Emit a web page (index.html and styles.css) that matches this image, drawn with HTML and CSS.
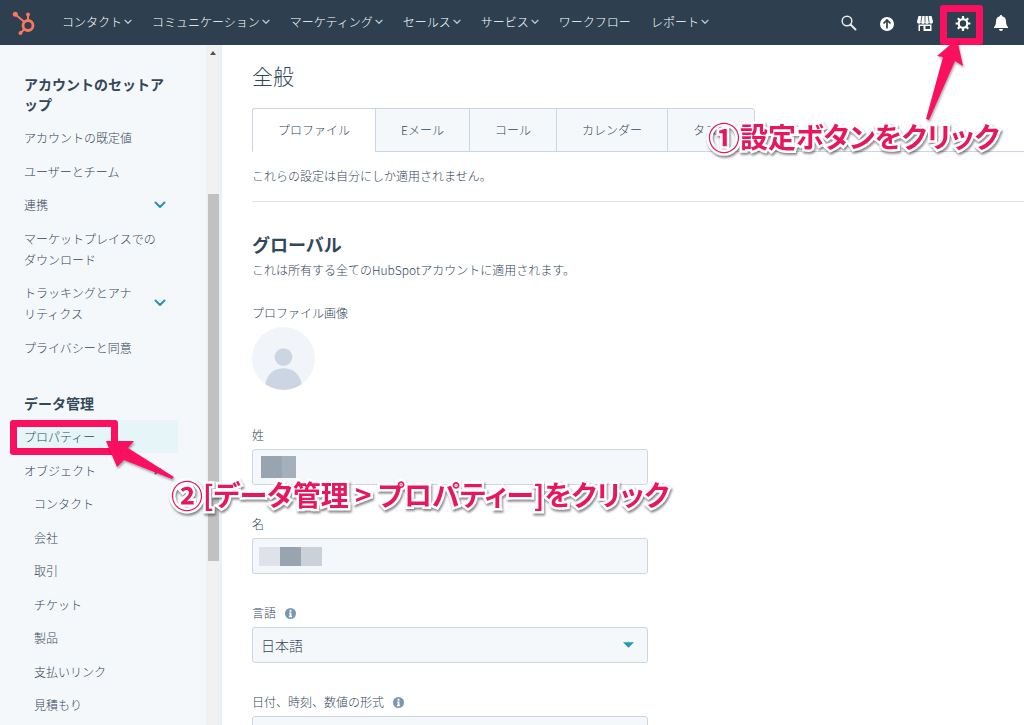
FILE: index.html
```html
<!DOCTYPE html>
<html lang="ja">
<head>
<meta charset="utf-8">
<title>設定 - 全般</title>
<link rel="stylesheet" href="styles.css">
</head>
<body>
<svg class="defs" aria-hidden="true">
  <symbol id="chev" viewBox="0 0 12 8"><path d="M1.500 1.500 6 6l4.500-4.500" fill="none" stroke="currentColor" stroke-width="2" stroke-linecap="round" stroke-linejoin="round"/></symbol>
  <symbol id="info" viewBox="0 0 12 12"><circle cx="6" cy="6" r="6" fill="#7895b5"/><path d="M5 2h2v2H5zM4.500 5H7v3.500h.8V10H4.300V8.500H5V6h-.5z" fill="#fff"/></symbol>
</svg>

<header class="topbar">
  <a class="logo" href="#" aria-label="HubSpot">
    <svg viewBox="0 0 24 26" width="24" height="26" fill="none" stroke="#f8795c">
      <circle cx="16" cy="15.500" r="5" stroke-width="2.800"/>
      <path d="M16 10V5M12.500 12 4 5M12.500 19 9 22.500" stroke-width="2"/>
      <g fill="#f8795c" stroke="none"><circle cx="3.300" cy="4.200" r="2.500"/><circle cx="16" cy="4.500" r="2"/><circle cx="8.500" cy="23" r="2"/></g>
    </svg>
  </a>
  <nav class="menu" aria-label="メイン">
    <a href="#">コンタクト<svg><use href="#chev"/></svg></a>
    <a href="#">コミュニケーション<svg><use href="#chev"/></svg></a>
    <a href="#">マーケティング<svg><use href="#chev"/></svg></a>
    <a href="#">セールス<svg><use href="#chev"/></svg></a>
    <a href="#">サービス<svg><use href="#chev"/></svg></a>
    <a href="#">ワークフロー</a>
    <a href="#">レポート<svg><use href="#chev"/></svg></a>
  </nav>
  <div class="tools">
    <button type="button" aria-label="検索"><svg viewBox="0 0 18 18" fill="none" stroke="#e6ebef"><circle cx="7" cy="7" r="4.800" stroke-width="1.500"/><path d="m10.500 10.500 5 5" stroke-width="2" stroke-linecap="round"/></svg></button>
    <button type="button" aria-label="アップグレード"><svg viewBox="0 0 18 18"><circle cx="9" cy="10" r="7" fill="#fff"/><path d="M9 14.500V6.500M5.500 9.500 9 6l3.500 3.500" fill="none" stroke="#2e3f50" stroke-width="1.700"/></svg></button>
    <button type="button" aria-label="マーケットプレイス"><svg viewBox="0 0 18 18"><path d="M2.500 2h13L17 7.500a2 2 0 0 1-4 .5 2 2 0 0 1-4 0 2 2 0 0 1-4 0A2 2 0 0 1 1 7.500zM2.500 10.500h13v6.500h-13z" fill="#fff"/><path d="M5.800 2 5 8M9 2v6M12.200 2l.8 6" stroke="#2e3f50" stroke-width=".8"/><path d="M4 12h3.500v5H4zM9.500 12H14v3H9.500z" fill="#2e3f50"/></svg></button>
    <button type="button" aria-label="設定"><svg viewBox="0 0 18 18" fill="none" stroke="#fff"><circle cx="9" cy="9.500" r="4.300" stroke-width="2.200"/><path d="M9 2.100v3M9 13.900v3M1.600 9.500h3M13.400 9.500h3M3.800 4.300l2 2M12.200 12.700l2 2M3.800 14.700l2-2M12.200 6.300l2-2" stroke-width="2.200"/></svg></button>
    <button type="button" aria-label="通知"><svg viewBox="0 0 18 18" fill="#fff"><path d="M9 1a1.300 1.300 0 0 0-1.300 1.200C5.200 2.800 4 4.700 4 7.200c0 3.500-1 4.800-2 5.800v1h14v-1c-1-1-2-2.300-2-5.800 0-2.500-1.200-4.400-3.700-5A1.300 1.300 0 0 0 9 1zM7 15h4a2 2 0 0 1-4 0z"/></svg></button>
  </div>
</header>

<div class="shell">
  <aside class="sidebar">
    <nav class="side-nav" aria-label="設定">
      <h2>アカウントのセットアップ</h2>
      <ul>
        <li><a href="#">アカウントの既定値</a></li>
        <li><a href="#">ユーザーとチーム</a></li>
        <li><a href="#"><span>連携</span><svg><use href="#chev"/></svg></a></li>
        <li><a href="#">マーケットプレイスでのダウンロード</a></li>
        <li><a href="#"><span>トラッキングとアナリティクス</span><svg><use href="#chev"/></svg></a></li>
        <li><a href="#">プライバシーと同意</a></li>
      </ul>
      <h2>データ管理</h2>
      <ul>
        <li><a class="current" href="#">プロパティー</a></li>
        <li><a href="#"><span>オブジェクト</span><svg class="up"><use href="#chev"/></svg></a></li>
      </ul>
      <ul class="sub">
        <li><a href="#">コンタクト</a></li>
        <li><a href="#">会社</a></li>
        <li><a href="#">取引</a></li>
        <li><a href="#">チケット</a></li>
        <li><a href="#">製品</a></li>
        <li><a href="#">支払いリンク</a></li>
        <li><a href="#">見積もり</a></li>
      </ul>
    </nav>
    <div class="scroll" aria-hidden="true">
      <svg viewBox="0 0 6 4" width="6" height="4"><path d="M3 0 6 4H0z" fill="#505050"/></svg>
      <div class="thumb"></div>
    </div>
  </aside>

  <main class="content">
    <h1>全般</h1>
    <div class="tabs" role="tablist">
      <button type="button" role="tab" aria-selected="true">プロファイル</button>
      <button type="button" role="tab">Eメール</button>
      <button type="button" role="tab">コール</button>
      <button type="button" role="tab">カレンダー</button>
      <button type="button" role="tab">タスク</button>
    </div>
    <p class="note">これらの設定は自分にしか適用されません。</p>
    <section class="global">
      <h2>グローバル</h2>
      <p>これは所有する全てのHubSpotアカウントに適用されます。</p>
      <div class="field photo">
        <span class="label">プロファイル画像</span>
        <svg class="avatar" viewBox="0 0 64 64"><defs><clipPath id="round"><circle cx="32" cy="32" r="32"/></clipPath></defs><g clip-path="url(#round)"><path d="M0 0h64v64H0z" fill="#f1f4f8"/><circle cx="32" cy="30.500" r="9" fill="#cbd6e2"/><path d="M13 64c0-13 7-22 19-22s19 9 19 22z" fill="#cbd6e2"/></g></svg>
      </div>
      <div class="field">
        <label for="last">姓</label>
        <div class="control"><input id="last" type="text"><span class="mask"><i class="dark wide"></i><i class="mid"></i></span></div>
      </div>
      <div class="field">
        <label for="first">名</label>
        <div class="control"><input id="first" type="text"><span class="mask short"><i class="pale wide"></i><i class="dark wide"></i><i class="light wide"></i></span></div>
      </div>
      <div class="field">
        <label for="lang">言語<svg><use href="#info"/></svg></label>
        <div class="control"><select id="lang"><option>日本語</option></select><svg class="caret" viewBox="0 0 12 6"><path d="M0 0h12L6 6z" fill="#1a9fae"/></svg></div>
      </div>
      <div class="field">
        <label for="format">日付、時刻、数値の形式<svg><use href="#info"/></svg></label>
        <div class="control"><select id="format"><option></option></select></div>
      </div>
    </section>
  </main>
</div>

<div class="frame frame-settings"></div>
<div class="frame frame-property"></div>
<svg class="arrow arrow-settings" viewBox="0 0 40 84" width="40" height="84"><path d="M31 0 37 27 29 22 3 81 0 80 17 18 11 17z" fill="#fb0f5f"/></svg>
<svg class="arrow arrow-property" viewBox="0 0 72 44" width="72" height="44"><path d="M0 4 28 4 22 11 68 40 66 42 18 23 11 30z" fill="#fb0f5f"/></svg>
<p class="callout callout-settings"><span class="num">①</span>設定ボタンをクリック</p>
<p class="callout callout-property"><span class="num">②</span>[データ管理 &gt; プロパティー]をクリック</p>
</body>
</html>
```
FILE: styles.css
```css
* { box-sizing: border-box; }

body {
  margin: 0;
  height: 100vh;
  display: flex;
  flex-direction: column;
  overflow: hidden;
  position: relative;
  background: #fff;
  color: #33475b;
  font: 300 12px/20px "Noto Sans CJK JP", sans-serif;
}

h1, h2, p, ul { margin: 0; padding: 0; }
ul { list-style: none; }
a { color: inherit; text-decoration: none; }
button, input, select { font: inherit; color: inherit; }
.defs { position: absolute; width: 0; height: 0; }

.topbar {
  flex: none;
  display: flex;
  align-items: center;
  height: 45px;
  padding: 0 14px 0 12px;
  background: #2e3f50;
  color: #fff;
}
.logo { display: flex; width: 50px; }
.menu { display: flex; gap: 20px; padding-bottom: 2px; font-weight: 300; }
.menu a { display: flex; align-items: center; gap: 2px; white-space: nowrap; }
.menu svg { width: 8px; height: 6px; color: #b8c3cd; }
.tools { display: flex; gap: 20px; margin-left: auto; }
.tools button { display: flex; padding: 0; border: 0; background: none; }
.tools svg { width: 18px; height: 18px; }

.shell { flex: 1; min-height: 0; display: flex; }
.sidebar {
  flex: none;
  display: flex;
  width: 222px;
  background: #f5f8fa;
  border-right: 3px solid #eaf0f5;
  overflow: hidden;
}
.side-nav { flex: 1; padding: 29px 28px 0 12px; }
.side-nav h2 { padding: 0 12px 7px; font-size: 14px; line-height: 20px; font-weight: 700; }
.side-nav ul + h2 { padding-top: 29px; }
.side-nav a {
  display: flex;
  align-items: center;
  justify-content: space-between;
  gap: 20px;
  padding: 6px 12px;
  line-height: 21px;
}
.side-nav li:nth-child(odd) { padding-bottom: 1px; }
.side-nav svg { flex: none; width: 12px; height: 8px; color: #2a93a8; }
.side-nav .up { transform: rotate(180deg); }
.side-nav .current { background: #e5f5f8; }
.side-nav .sub a { padding-left: 22px; }
.scroll {
  width: 13px;
  padding: 6px 0 0 2px;
  background: #f1f1f1;
}
.scroll svg { display: block; margin-left: 2px; }
.thumb { height: 367px; margin-top: 139px; background: #c1c1c1; }

.content { flex: 1; min-width: 0; padding: 14px 0 0 30px; overflow: hidden; }
h1 { padding-bottom: 17px; font-size: 21px; line-height: 32px; font-weight: 300; }
.tabs { display: flex; border-bottom: 1px solid #cbd6e2; }
.tabs button {
  height: 44px;
  margin-bottom: -1px;
  padding: 0 25px;
  border: 1px solid #cbd6e2;
  border-right-width: 0;
  background: #f5f8fa;
}
.tabs button:first-child { border-radius: 3px 0 0 0; }
.tabs button:last-child { border-right-width: 1px; border-radius: 0 3px 0 0; }
.tabs [aria-selected] { background: #fff; border-bottom-color: #fff; }
.note { padding: 14px 0 15px; border-bottom: 1px solid #dfe3eb; }
.global { padding-top: 29px; }
.global h2 { padding-bottom: 3px; font-size: 18px; line-height: 26px; font-weight: 700; }
.field { display: flex; flex-direction: column; width: 396px; max-width: 100%; padding-bottom: 29px; }
.photo { padding: 23px 0 35px; }
.label { padding-bottom: 4px; }
.avatar { width: 63px; height: 63px; }
.field label { display: flex; align-items: center; gap: 9px; padding-bottom: 4px; }
.field label svg { width: 11px; height: 11px; }
.control { display: grid; align-items: center; }
.control > * { grid-area: 1 / 1; }
.control input, .control select {
  width: 100%;
  height: 36px;
  padding: 0 8px;
  border: 1px solid #cbd6e2;
  border-radius: 3px;
  background: #f5f8fa;
  font-size: 14px;
  appearance: none;
}
.mask { display: flex; height: 22px; padding-left: 9px; }
.mask i { width: 14px; }
.mask .wide { width: 21px; }
.mask.short { height: 19px; padding-left: 7px; }
.dark { background: #98a4b0; }
.mid { background: #a5b0bb; }
.light { background: #cbd1d9; }
.pale { background: #dfe3e9; }
.caret { width: 11px; height: 6px; justify-self: end; margin-right: 14px; }

/* Tutorial marks drawn over the page */
.frame { position: absolute; border: 7px solid #fb0f5f; border-radius: 3px; }
.frame-settings { top: 5px; left: 940px; width: 43px; height: 40px; }
.frame-property { top: 420px; left: 10px; width: 108px; height: 35px; }
.arrow { position: absolute; filter: drop-shadow(1px 2px 1px #0005); }
.arrow-settings { top: 39px; left: 926px; }
.arrow-property { top: 437px; left: 106px; }
.callout {
  position: absolute;
  display: flex;
  align-items: center;
  color: #e8175d;
  font-size: 28px;
  line-height: 40px;
  font-weight: 700;
  font-feature-settings: "palt";
  white-space: pre;
  -webkit-text-stroke: 5px #fff;
  paint-order: stroke fill;
  filter: drop-shadow(1px 2px 1px #0007);
}
.num { font-size: 32px; }
.callout-settings { top: 116px; left: 708px; }
.callout-property { top: 474px; left: 171px; }
```
